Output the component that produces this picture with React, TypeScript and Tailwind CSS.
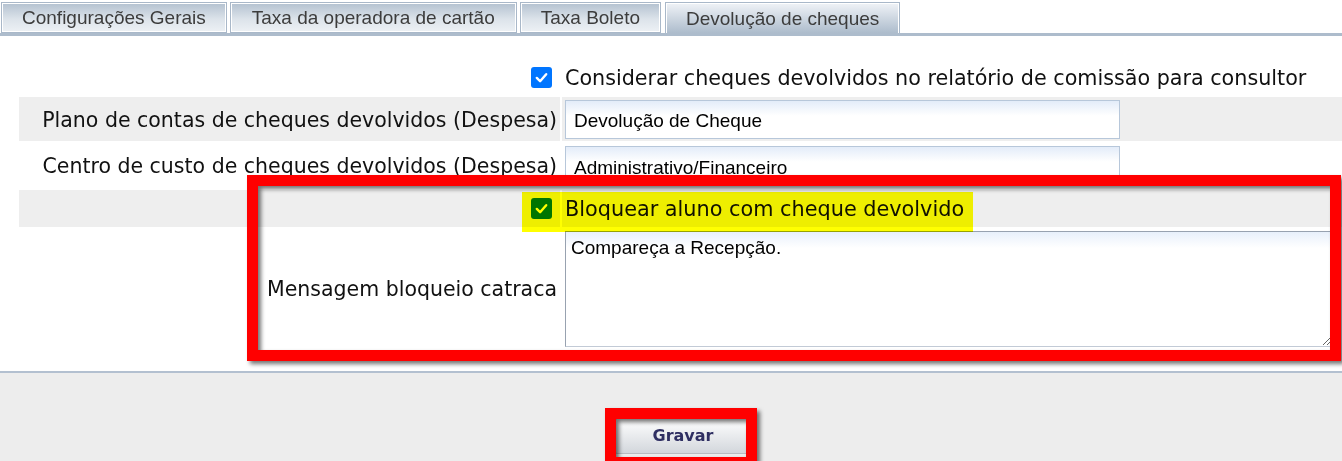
import React from "react";

const tabs = [
  { label: "Configurações Gerais", active: false, pad: "px-[20px]" },
  { label: "Taxa da operadora de cartão", active: false, pad: "px-[21px]" },
  { label: "Taxa Boleto", active: false, pad: "px-[20px]" },
  { label: "Devolução de cheques", active: true, pad: "px-[20px]" },
];

function Check() {
  return (
    <span className="flex h-[21px] w-[21px] items-center justify-center rounded-[3px] bg-[#0075ff]">
      <svg width="15" height="15" viewBox="0 0 16 16" fill="none">
        <path d="M3 8.5 L6.5 12 L13 4.5" stroke="#fff" strokeWidth="2.6" strokeLinecap="round" strokeLinejoin="round" />
      </svg>
    </span>
  );
}

const label =
  "flex items-center justify-end pr-[3px] pt-[2px] text-[20.5px] text-[#111] font-['DejaVu_Sans',sans-serif] whitespace-nowrap";
const field =
  "h-[39px] w-[555px] border border-[#b7c7da] bg-[linear-gradient(to_bottom,#e3ecf9,#ffffff_40%)] px-[8px] pt-[4px] text-[19px] text-black outline-none font-['Liberation_Sans',Arial,sans-serif]";

export default function App() {
  return (
    <div className="relative flex h-[461px] w-[1342px] flex-col overflow-hidden bg-white">
      {/* tabs */}
      <div className="flex h-[33px] items-end gap-[3px] pl-px pt-[2px]">
        {tabs.map((t) => (
          <div
            key={t.label}
            className={
              (t.active
                ? "ml-px flex h-[31px] items-center border border-b-0 border-[#a9b8c9] bg-linear-to-b from-[#f0f3f7] to-[#adbccc] pt-[2px] text-[19px] text-[#3c3c3c] shadow-[inset_1px_1px_0_#fff,inset_-1px_0_0_#fff] font-['Liberation_Sans',Arial,sans-serif] "
                : "flex h-[31px] items-center border border-[#a9b8c9] bg-[linear-gradient(to_bottom,#b3c1d0,#dce3ea_55%,#edf1f5)] pt-[1px] text-[19px] text-[#3c3c3c] shadow-[inset_0_0_0_1px_#fff] font-['Liberation_Sans',Arial,sans-serif] ") +
              t.pad
            }
          >
            {t.label}
          </div>
        ))}
      </div>
      <div className="h-[3px] bg-[#adbccc]" />

      {/* form */}
      <div className="h-[335px] pl-[19px] pt-[22px]">
        <div className="grid grid-cols-[541px_1fr] gap-x-[2px]">
          <div className="flex h-[39px] items-center justify-end pr-[8px]">
            <Check />
          </div>
          <div className="flex h-[39px] items-center pl-[3px] pt-[2px] text-[20.7px] text-[#111] font-['DejaVu_Sans',sans-serif]">
            Considerar cheques devolvidos no relatório de comissão para consultor
          </div>

          <div className={label + " h-[44px] bg-[#eeeeee]"}>Plano de contas de cheques devolvidos (Despesa)</div>
          <div className="flex h-[44px] items-center bg-[#eeeeee] pl-[3px]">
            <input className={field} defaultValue="Devolução de Cheque" />
          </div>

          <div className={label + " h-[49px]"}>Centro de custo de cheques devolvidos (Despesa)</div>
          <div className="h-[49px] pl-[3px] pt-[5px]">
            <input className={field} defaultValue="Administrativo/Financeiro" />
          </div>

          <div className="flex h-[37px] items-center justify-end bg-[#eeeeee] pr-[8px]">
            <Check />
          </div>
          <div className="flex h-[37px] items-center bg-[#eeeeee] pl-[3px] pt-[2px] text-[20.8px] text-[#111] font-['DejaVu_Sans',sans-serif]">
            Bloquear aluno com cheque devolvido
          </div>

          <div className={label + " h-[123px]"}>Mensagem bloqueio catraca</div>
          <div className="h-[123px] pl-[3px] pt-[4px]">
            <textarea
              className="h-[116px] w-[767px] border border-[#98a2b0] border-b-[#c2cad6] border-r-[#c2cad6] bg-[linear-gradient(to_bottom,#e8f0fb,#ffffff_14%)] px-[5px] pt-[5px] text-[19px] leading-[22px] text-black outline-none font-['Liberation_Sans',Arial,sans-serif]"
              defaultValue="Compareça a Recepção."
            />
          </div>
        </div>
      </div>

      <div className="h-[2px] bg-[#b3c0d0]" />
      <div className="flex-1 bg-[#ededed] pt-[45px]">
        <button className="ml-[615px] h-[36px] w-[136px] rounded-[2px] border border-[#b9bcc2] bg-linear-to-b from-white to-[#d3d7dc] text-[16px] font-semibold text-[#2f2f62] font-['DejaVu_Sans',sans-serif]">
          Gravar
        </button>
      </div>

      {/* annotations */}
      <div className="pointer-events-none absolute left-[522px] top-[192px] h-[40px] w-[451px] bg-[#ffff00] mix-blend-multiply" />
      <div className="pointer-events-none absolute left-[247px] top-[175px] h-[186px] w-[1094px] border-[11px] border-[#ff0000] drop-shadow-[3px_3px_2px_rgba(0,0,0,0.55)]" />
      <div className="pointer-events-none absolute left-[605px] top-[408px] h-[60px] w-[152px] border-[11px] border-[#ff0000] drop-shadow-[3px_3px_2px_rgba(0,0,0,0.55)]" />
    </div>
  );
}
